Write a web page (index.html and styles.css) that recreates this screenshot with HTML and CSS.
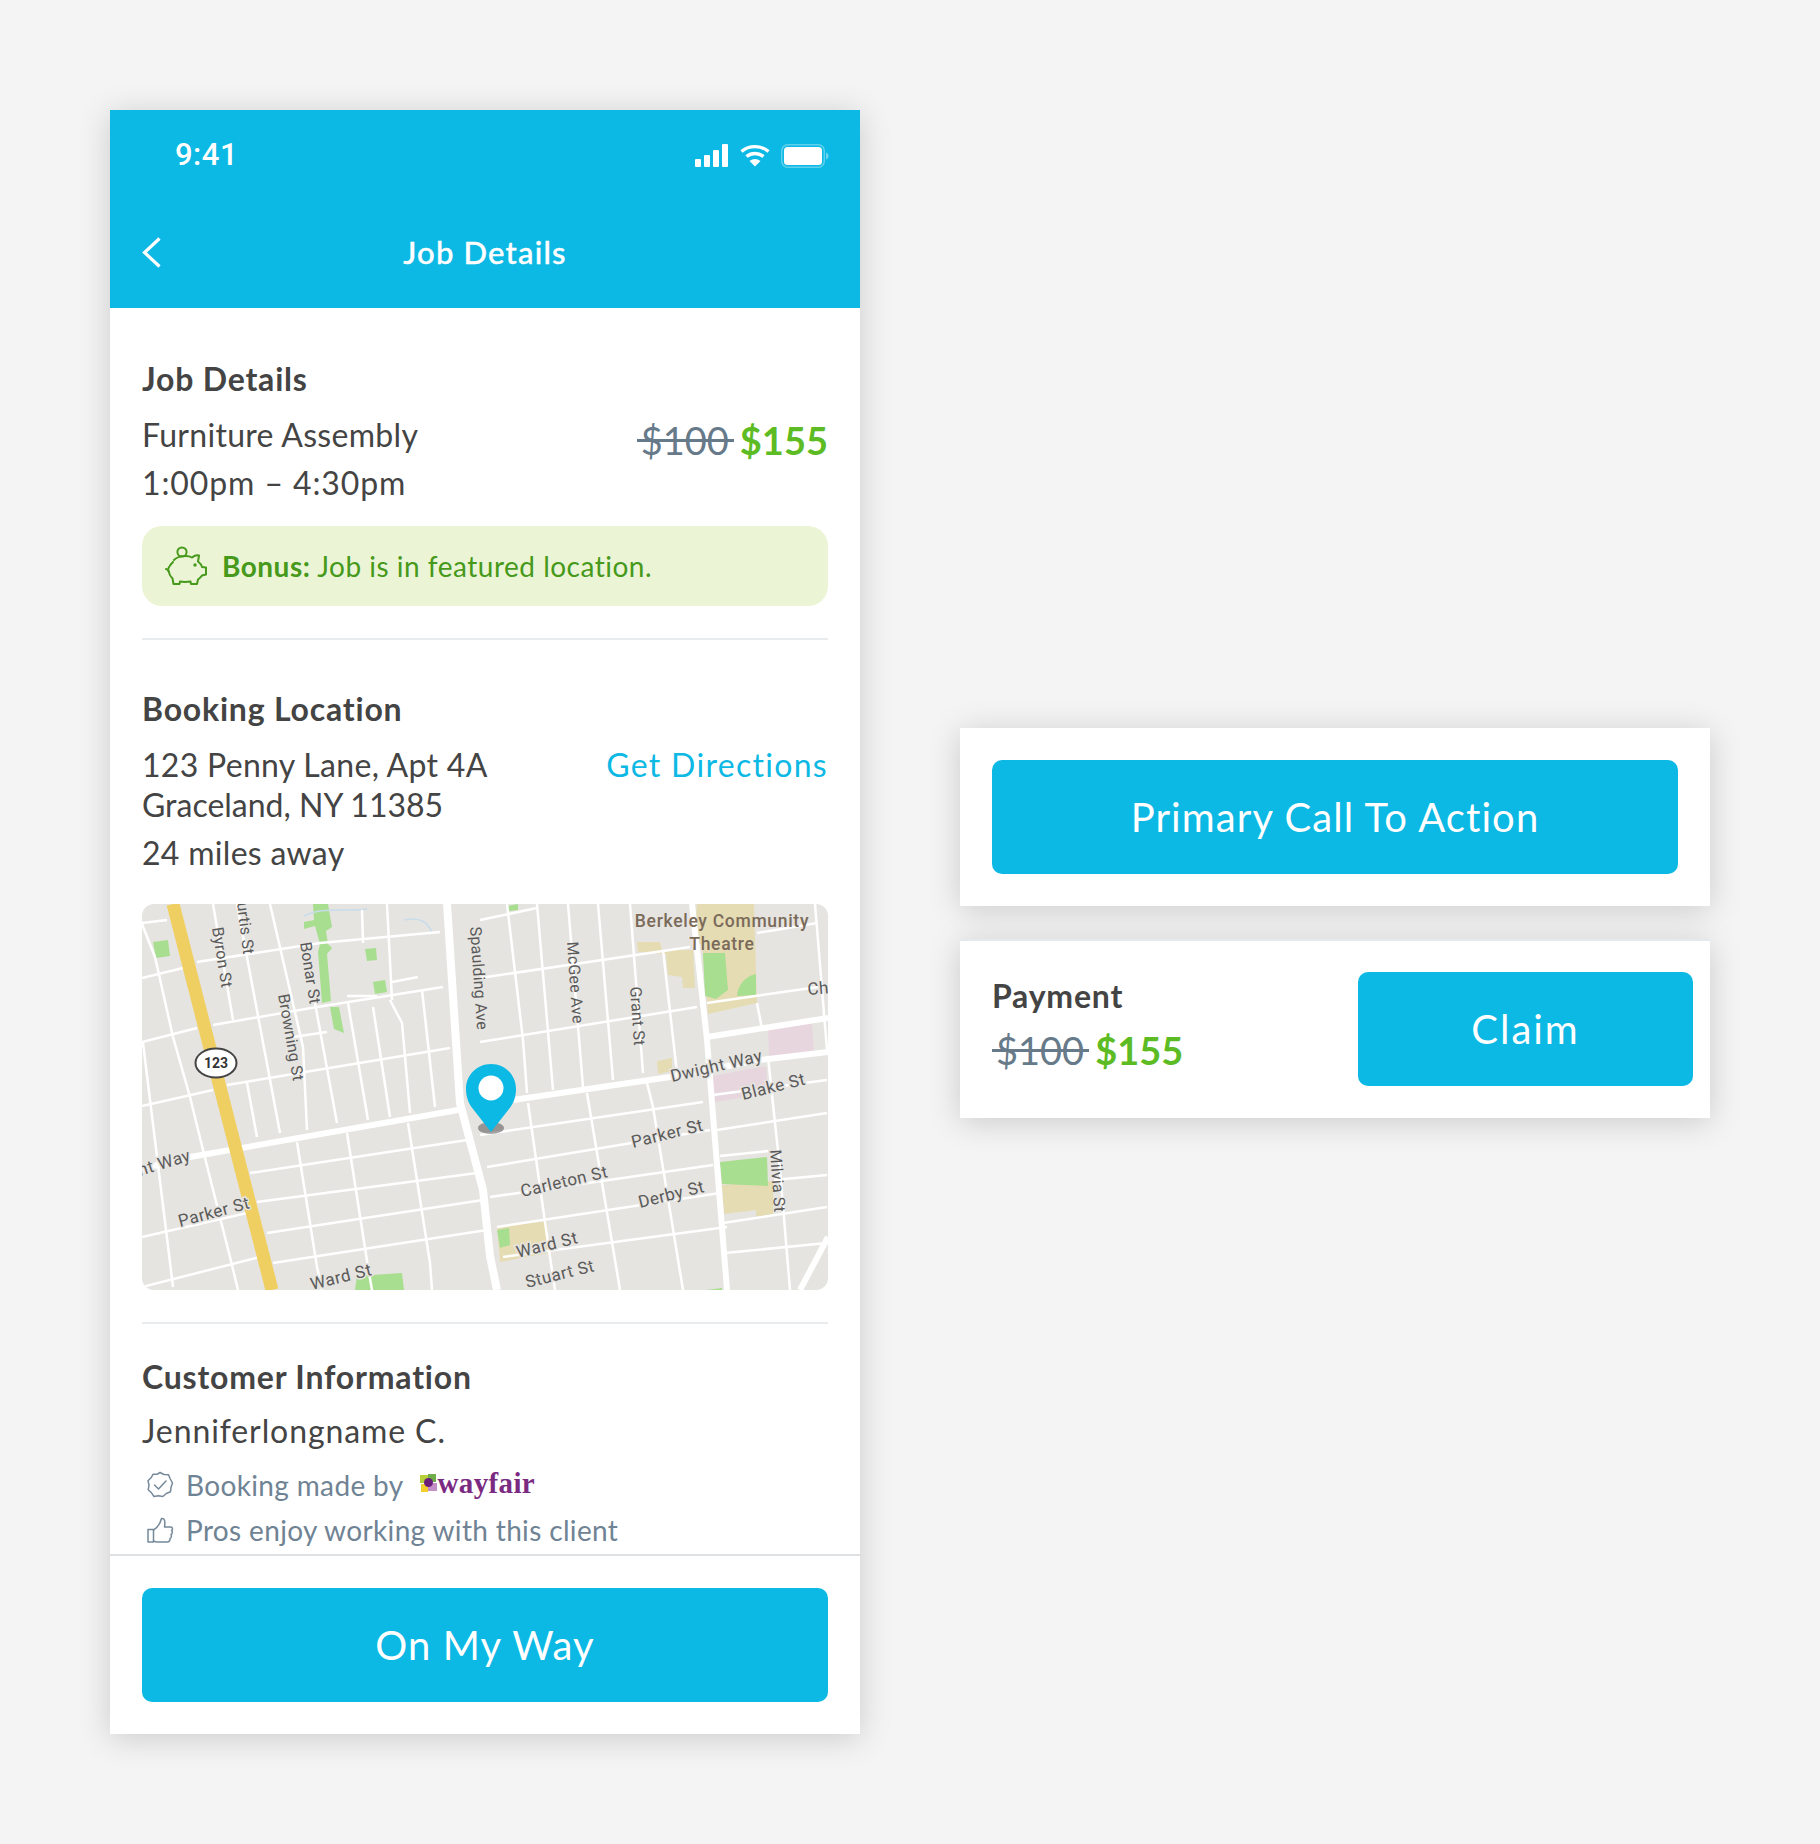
FILE: index.html

```html
<!DOCTYPE html>
<html lang="en">
<head>
  <meta charset="UTF-8">
  <meta name="viewport" content="width=device-width, initial-scale=1.0">
  <title>Job Details</title>
  <link rel="stylesheet" href="styles.css">
</head>
<body>

  <div class="page">
    <!-- Phone -->
    <div class="phone">
      <header class="top">
        <div class="status">
          <span class="time">9:41</span>
          <div class="status-icons">
            <svg width="34" height="23" viewBox="0 0 34 23"><rect x="0" y="15" width="6" height="8" rx="1" fill="#fff"/><rect x="9" y="11" width="6" height="12" rx="1" fill="#fff"/><rect x="18" y="6" width="6" height="17" rx="1" fill="#fff"/><rect x="27" y="0" width="6" height="23" rx="1" fill="#fff"/></svg>
            <svg width="30" height="23" viewBox="0 0 30 23" fill="none" stroke="#fff" stroke-width="3.4"><path d="M1.5 7.5C9 1 21 1 28.5 7.5"/><path d="M6.5 12.5C11.5 8.5 18.5 8.5 23.5 12.5"/><path d="M15 22.5L9.5 17C13 14.2 17 14.2 20.5 17Z" fill="#fff" stroke="none"/></svg>
            <svg width="48" height="24" viewBox="0 0 48 24"><rect x="0.75" y="0.75" width="42.5" height="22.5" rx="6" fill="none" stroke="#fff" stroke-opacity=".35" stroke-width="1.5"/><rect x="3" y="3" width="38" height="18" rx="3.5" fill="#fff"/><path d="M45 8.5c1.6.6 2.6 2 2.6 3.5s-1 2.9-2.6 3.5z" fill="#fff" fill-opacity=".4"/></svg>
          </div>
        </div>
        <div class="nav">
          <svg class="back" width="19" height="31" viewBox="0 0 19 31" fill="none" stroke="#fff" stroke-width="3.2"><path d="M17.5 1.5L2.5 15.5L17.5 29.5"/></svg>
          <span class="nav-title">Job Details</span>
        </div>
      </header>

      <div class="content">
        <!-- Job -->
        <section class="sec sec-job">
          <h3>Job Details</h3>
          <div class="job-row">
            <div>
              <div class="line tall">Furniture Assembly</div>
              <div class="line tall wide">1:00pm – 4:30pm</div>
            </div>
            <div class="price"><s>$100</s><b>$155</b></div>
          </div>
          <div class="bonus">
            <svg width="44" height="40" viewBox="0 0 44 40" fill="none" stroke="#46991a" stroke-width="2" stroke-linejoin="round" stroke-linecap="round">
              <circle cx="17" cy="6" r="4.6"/>
              <path d="M9 14C13 9.5 23 9 27 11.5C29.5 9.5 32 9 34 9.5L33 15.5C35 17 36.500 19 37 21L41 21.500V28.500L37 29.500C36 31 34.500 32.500 33 33.500L32 38H26L25.500 35.500C22 36 18 36 15 35.500L14.500 38H8.500L7.500 32.500C5 30 4 28 3.800 25.500C3.300 24 2 23.500 1 23"/>
              <path d="M3.800 25.500C2 24 4 20 8 16"/>
              <circle cx="30" cy="19" r=".7" fill="#46991a"/>
            </svg>
            <span class="bonus-text"><b>Bonus:</b> Job is in featured location.</span>
          </div>
        </section>

        <!-- Location -->
        <section class="sec sec-loc">
          <h3>Booking Location</h3>
          <div class="loc-row">
            <div>
              <div class="line">123 Penny Lane, Apt 4A</div>
              <div class="line narrow">Graceland, NY 11385</div>
            </div>
            <a class="directions" href="#">Get Directions</a>
          </div>
          <div class="line miles">24 miles away</div>

          <div class="map">
            <svg width="686" height="386" viewBox="0 0 686 386">
              <rect class="land" width="686" height="386"/>

              <!-- parks and blocks -->
              <path class="tan" d="M555 0H612L615 99L566 110L560 40H552Z"/>
              <path class="tan" d="M495 38H518L520 46L525 46H551L553 84H541L540 73L526 71L524 50L496 48Z"/>
              <path class="tan" d="M515 157L530 154V167L516 170Z"/>
              <path class="tan" d="M580 281L631 277V310L614 313V306L582 310Z"/>
              <path class="tan" d="M355 323L405 317L407 349L358 358Z"/>
              <path class="pink" d="M626 125L670 119L672 148L627 153Z"/>
              <path class="pink" d="M570 172L624 162L626 190L572 198Z"/>
              <path class="green" d="M11 38L26 36L28 52L14 54Z"/>
              <path class="green" d="M171 0H186L190 23L184 27L186 40L190 44L185 50L189 97L180 99L176 48L178 40L173 22L162 25V18L172 16Z"/>
              <path class="green" d="M188 103L197 103L202 129L192 125Z"/>
              <path class="green" d="M223 45L234 44L235 56L225 57Z"/>
              <path class="green" d="M231 78L243 76L245 88L233 90Z"/>
              <path class="green" d="M215 372L260 369L262 386H213Z"/>
              <path class="green" d="M366 2L376 0V6L367 7Z"/>
              <path class="green" d="M561 49H583L586 86L574 95L563 92Z"/>
              <path class="green" d="M595 92C596 80 604 72 614 70V91Z"/>
              <path class="green" d="M578 258L625 253L626 282L580 280Z"/>
              <path class="green" d="M355 326L367 324L368 341L358 344Z"/>
              <path class="green" d="M564 386L580 384V386Z"/>

              <!-- water lines -->
              <path class="water" d="M162 12C180 2 210 8 225 5"/>
              <path class="water" d="M262 16C280 12 286 20 290 28"/>

              <!-- small streets -->
              <path class="st" d="M0 19L25 16M55 58L178 39L298 28M0 74L41 64M71 121L175 103L301 83M0 138L55 124M85 181L308 144M0 202L71 186M108 269L325 236M115 298L335 269M125 329L341 296M0 333L105 309M131 359L345 326M0 383L118 353"/>
              <path class="st" d="M13 53L31 133L48 193L61 246L88 353L96 386M1 139L31 383M71 0L91 116M95 0L138 229M128 0L161 143L165 226M173 99L195 219M206 99L226 216M231 103L248 213M248 96L260 119L268 209M280 86L293 203M220 6L221 39M245 0L250 96M105 179L115 233M155 238L175 363L180 386M205 229L226 363L230 386M266 219L288 359L290 386M0 20L13 53M205 92H235M250 78L276 73M151 133L185 128"/>
              <path class="st" d="M338 16L395 4M338 74L548 43M338 138L555 103M338 231L561 198M345 263L568 226M348 293L571 261M355 323L578 289M361 353L585 323M571 191L685 176M575 226L685 209M581 319L685 303M583 349L685 339M565 99L676 83M615 29L675 19M578 252L626 247M632 276L685 271"/>
              <path class="st" d="M365 0L381 136L385 189M395 0L411 186M426 0L441 183M456 0L471 176M488 0L501 169M521 46L535 169M386 199L408 353L413 386M445 189L478 386M505 179L511 203L541 386M626 153L638 266L648 386M615 99L620 125M673 0L685 146"/>

              <!-- big roads -->
              <path class="road" d="M305 0L318 199L341 286L348 352L355 386"/>
              <path class="road thin" d="M0 265L48 253L316 206M371 196L528 173L618 156L686 148"/>
              <path class="road thin" d="M550 0L565 136L585 386"/>
              <path class="road thin" d="M565 133L686 114"/>
              <path class="road thin" d="M658 386L686 333"/>
              <path class="hwy" d="M31 0L130 386"/>

              <!-- labels -->
              <text class="lbl side-lbl" transform="translate(95 -1) rotate(83)">urtis St</text>
              <text class="lbl side-lbl" transform="translate(70 24) rotate(81)">Byron St</text>
              <text class="lbl side-lbl" transform="translate(158 39) rotate(81)">Bonar St</text>
              <text class="lbl side-lbl" transform="translate(136 91) rotate(80)">Browning St</text>
              <text class="lbl side-lbl" transform="translate(328 23) rotate(86)">Spaulding Ave</text>
              <text class="lbl side-lbl" transform="translate(425 38) rotate(86)">McGee Ave</text>
              <text class="lbl side-lbl" transform="translate(488 83) rotate(86)">Grant St</text>
              <text class="lbl side-lbl" transform="translate(628 246) rotate(86)">Milvia St</text>
              <text class="lbl halo" transform="translate(530 178) rotate(-13)">Dwight Way</text>
              <text class="lbl halo" transform="translate(601 196) rotate(-14)">Blake St</text>
              <text class="lbl halo" transform="translate(491 244) rotate(-14)">Parker St</text>
              <text class="lbl halo" transform="translate(380 293) rotate(-13)">Carleton St</text>
              <text class="lbl halo" transform="translate(498 304) rotate(-14)">Derby St</text>
              <text class="lbl halo" transform="translate(376 354) rotate(-14)">Ward St</text>
              <text class="lbl halo" transform="translate(385 384) rotate(-14)">Stuart St</text>
              <text class="lbl halo" transform="translate(38 323) rotate(-15)">Parker St</text>
              <text class="lbl halo" transform="translate(170 386) rotate(-14)">Ward St</text>
              <text class="lbl halo" transform="translate(-2 272) rotate(-17)">nt Way</text>
              <text class="lbl" transform="translate(666 91) rotate(-5)">Ch</text>
              <text class="poi" x="580" y="23">Berkeley Community</text>
              <text class="poi" x="580" y="46">Theatre</text>

              <!-- 123 shield -->
              <ellipse class="shield" cx="74" cy="159" rx="20.500" ry="14.500"/>
              <text class="shield-num" x="74" y="164">123</text>

              <!-- pin -->
              <ellipse class="pin-shadow" cx="349" cy="224" rx="13" ry="6"/>
              <path class="pin" d="M349 228L331 205C326 199 324 192 324 185C324 171 335 160 349 160C363 160 374 171 374 185C374 192 372 199 367 205Z"/>
              <circle class="pin-dot" cx="349" cy="184" r="12.500"/>
            </svg>
          </div>
        </section>

        <!-- Customer -->
        <section class="sec sec-cust">
          <h3>Customer Information</h3>
          <div class="line name wide">Jenniferlongname C.</div>
          <div class="note note-first">
            <svg class="note-icon" width="28" height="28" viewBox="0 0 28 28" fill="none" stroke="#76899a" stroke-width="1.500" stroke-linecap="round" stroke-linejoin="round"><path d="M14 1.500L18 3.500L22.500 3.800L24.300 8L26.500 12L25 16.300L24.500 20.800L20.300 22.500L16.800 25.500L12.300 24.800L8 25.500L5.500 21.800L2.200 18.800L3 14L2 9.800L5.300 6.500L7 3.300L11 3.300Z"/><path d="M8.500 14L12.500 18L20 10"/></svg>
            <span>Booking made by</span>
            <span class="wayfair">
              <svg width="17" height="20" viewBox="0 0 17 20"><rect x="0" y="2" width="8" height="8" fill="#b6cf3a"/><rect x="8" y="1" width="8" height="8" fill="#6fae4a"/><rect x="1" y="11" width="7" height="8" fill="#f4cf2c"/><rect x="8" y="10" width="9" height="8" fill="#c48fc6"/><circle cx="8.500" cy="9.500" r="4.500" fill="#6b1f7b"/></svg>
              <span class="wayfair-name">wayfair</span>
            </span>
          </div>
          <div class="note">
            <svg class="note-icon" width="28" height="28" viewBox="0 0 28 28" fill="none" stroke="#76899a" stroke-width="1.500" stroke-linecap="round" stroke-linejoin="round"><path d="M2 13.500H7.500V26H2Z"/><path d="M7.500 14C11 12 14 8 15.500 2.500C18.500 2 19.500 5 18.500 11H25C27 11.500 26.800 14 25.500 14.500C26.800 15.500 26.500 18 25 18.500C25.800 20 25.300 22 24 22.500C24.300 24.500 23 26 21.500 26H11C9.500 26 8.500 25.500 7.500 25"/></svg>
            <span>Pros enjoy working with this client</span>
          </div>
        </section>
      </div>

      <div class="footer">
        <button class="btn">On My Way</button>
      </div>
    </div>

    <!-- Sticky bar variants -->
    <div class="side">
      <div class="card">
        <button class="btn">Primary Call To Action</button>
      </div>
      <div class="card card-pay">
        <div class="pay-info">
          <h3>Payment</h3>
          <div class="price"><s>$100</s><b>$155</b></div>
        </div>
        <button class="btn btn-claim">Claim</button>
      </div>
    </div>
  </div>

</body>
</html>
```

FILE: styles.css

```css
body {
  margin: 0;
  padding: 0;
  background-color: #f4f4f4;
  font-family: Lato, "Open Sans", sans-serif;
  color: #444;
}
.page {
  display: flex;
  align-items: flex-start;
  gap: 100px;
  width: 1820px;
  height: 1844px;
  padding: 110px;
  box-sizing: border-box;
}
h3 {
  margin: 0;
  padding-bottom: 2px;
  font-size: 32px;
  line-height: 38px;
  font-weight: 700;
  letter-spacing: 0.8px;
  color: #444;
}

/* Phone */
.phone {
  flex: none;
  width: 750px;
  background-color: white;
  box-shadow: 0 4px 30px rgba(0, 0, 0, 0.17);
}
.top {
  height: 198px;
  background-color: #0cb8e4;
  color: white;
}
.status {
  display: flex;
  justify-content: space-between;
  align-items: center;
  height: 90px;
  padding: 0 31px 0 65px;
}
.time {
  font-family: Roboto, sans-serif;
  font-size: 31px;
  font-weight: 500;
  letter-spacing: 0.5px;
  margin-top: -1px;
}
.status-icons {
  display: flex;
  align-items: center;
  gap: 11px;
  margin-top: 1px;
}
.nav {
  position: relative;
  display: flex;
  justify-content: center;
  align-items: center;
  height: 56px;
  margin-top: 24px;
}
.back {
  position: absolute;
  left: 32px;
  top: 13px;
}
.nav-title {
  font-size: 31px;
  font-weight: 500;
  letter-spacing: 1.2px;
  -webkit-text-stroke: 0.4px white;
}
.sec {
  margin: 0 32px;
  border-bottom: 2px solid #e8ecef;
}
.sec-job {
  padding: 52px 0 32px;
}
.sec-loc {
  padding: 50px 0 32px;
}
.sec-cust {
  padding: 34px 0 4px;
  border-bottom: none;
}
.line {
  font-size: 32px;
  line-height: 40px;
  letter-spacing: 0.3px;
  color: #444;
}
.line.tall {
  line-height: 48px;
}
.line.wide {
  letter-spacing: 0.9px;
}
.line.narrow {
  letter-spacing: 0;
}
.job-row {
  display: flex;
  justify-content: space-between;
  margin-top: 11px;
}
.price {
  display: flex;
  gap: 11px;
  font-size: 38px;
  line-height: 48px;
  white-space: nowrap;
  margin-top: 5px;
}
.price s {
  position: relative;
  color: #667a8a;
  text-decoration: none;
}
.price s::after {
  content: "";
  position: absolute;
  left: -4px;
  right: -5px;
  top: 23px;
  height: 3px;
  background-color: #667a8a;
}
.price b {
  color: #5dbb24;
}
.bonus {
  display: flex;
  align-items: center;
  height: 80px;
  margin-top: 19px;
  padding-left: 23px;
  background-color: #ebf5d5;
  border-radius: 20px;
}
.bonus-text {
  margin-left: 13px;
  font-size: 28px;
  letter-spacing: 0.5px;
  color: #46991a;
}
.loc-row {
  display: flex;
  justify-content: space-between;
  margin-top: 15px;
}
.directions {
  font-size: 32px;
  line-height: 40px;
  letter-spacing: 1.3px;
  color: #0cb8e4;
  text-decoration: none;
}
.miles {
  margin-top: 8px;
}
.map {
  height: 386px;
  margin-top: 31px;
  border-radius: 12px;
  overflow: hidden;
}
.map svg {
  display: block;
}
.name {
  margin-top: 13px;
}
.note {
  display: flex;
  align-items: center;
  gap: 12px;
  margin: 5px 0 0 4px;
  font-size: 28px;
  line-height: 40px;
  letter-spacing: 0.35px;
  color: #6f8394;
}
.note-first {
  margin-top: 14px;
}
.wayfair {
  display: flex;
  align-items: center;
  margin: -4px 0 0 4px;
  gap: 1px;
}
.wayfair-name {
  font-family: "Liberation Serif", serif;
  font-size: 29px;
  font-weight: 700;
  color: #7b2a82;
}
.footer {
  padding: 32px;
  border-top: 2px solid #dde1e4;
}
.btn {
  display: block;
  width: 100%;
  height: 114px;
  border: none;
  border-radius: 10px;
  background-color: #0cb8e4;
  color: white;
  font-family: Lato, "Open Sans", sans-serif;
  font-size: 40px;
  letter-spacing: 1.1px;
}

/* Map */
.land { fill: #e6e4e0; }
.tan { fill: #e6dcb4; }
.pink { fill: #e8d6de; }
.green { fill: #a8de8f; }
.water { fill: none; stroke: #c8dceb; stroke-width: 1.5; }
.st { fill: none; stroke: white; stroke-width: 2.5; }
.road { fill: none; stroke: white; stroke-width: 8; }
.road.thin { stroke-width: 6; }
.hwy { fill: none; stroke: #f0cf62; stroke-width: 13; }
.lbl {
  font-family: Roboto, sans-serif;
  font-size: 17px;
  letter-spacing: 0.5px;
  fill: #5a5a5a;
}
.lbl.side-lbl {
  font-size: 16px;
  letter-spacing: 0.2px;
}
.lbl.halo {
  paint-order: stroke;
  stroke: #e6e4e0;
  stroke-width: 3px;
}
.poi {
  font-family: Roboto, sans-serif;
  font-size: 17.5px;
  font-weight: 500;
  letter-spacing: 0.7px;
  text-anchor: middle;
  fill: #7a6a5a;
}
.shield { fill: white; stroke: #444; stroke-width: 2; }
.shield-num {
  font-family: Roboto, sans-serif;
  font-size: 14px;
  font-weight: 700;
  text-anchor: middle;
  fill: #333;
}
.pin { fill: #0cb8e4; }
.pin-dot { fill: white; }
.pin-shadow { fill: rgba(0, 0, 0, 0.35); }

/* Side cards */
.side {
  flex: none;
  display: flex;
  flex-direction: column;
  gap: 33px;
  width: 750px;
  margin-top: 618px;
}
.card {
  padding: 32px;
  background-color: white;
  box-shadow: 0 4px 30px rgba(0, 0, 0, 0.17);
}
.card-pay {
  display: flex;
  justify-content: space-between;
  align-items: center;
  padding: 31px 17px 32px 32px;
  border-top: 2px solid #e3e9ed;
}
.pay-info {
  margin-bottom: 8px;
}
.pay-info h3 {
  padding-bottom: 11px;
}
.pay-info .price {
  margin: 0 0 0 4px;
}
.btn-claim {
  width: 335px;
  letter-spacing: 2px;
}
```
